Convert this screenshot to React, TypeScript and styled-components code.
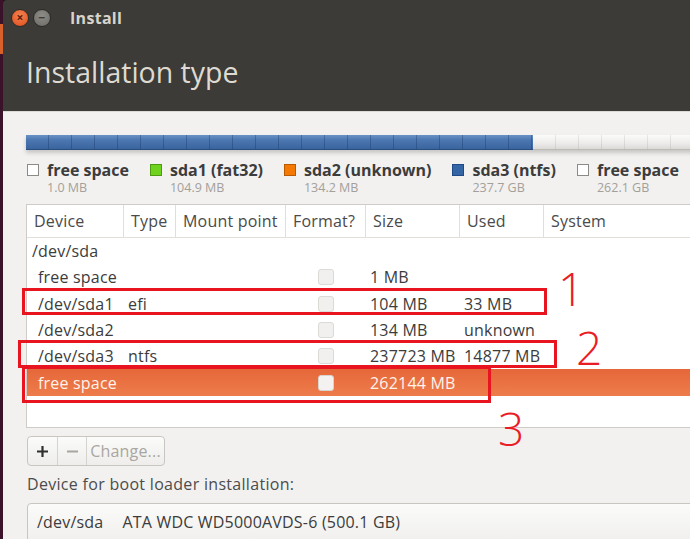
import React from 'react';
import styled, { createGlobalStyle } from 'styled-components';

const GlobalStyle = createGlobalStyle`
  html, body {
    margin: 0;
    padding: 0;
    width: 690px;
    height: 539px;
    overflow: hidden;
    background: #2b0b1e;
  }
  * { box-sizing: border-box; }
`;

const FONT = `"Open Sans", "DejaVu Sans", sans-serif`;

const Screen = styled.div`
  display: flex;
  width: 690px;
  height: 539px;
  font-family: ${FONT};
`;

const DesktopStrip = styled.div`
  width: 3px;
  flex-shrink: 0;
  background: linear-gradient(
    180deg,
    #3a1229 0 24px,
    #d8602a 24px 54px,
    #3a1229 54px 100%
  );
`;

const Window = styled.div`
  position: relative;
  flex: 1;
  display: flex;
  flex-direction: column;
  overflow: hidden;
  border-top-left-radius: 4px;
`;

const TitleBar = styled.div`
  height: 35px;
  flex-shrink: 0;
  display: flex;
  align-items: center;
  padding-left: 8px;
  gap: 4px;
  background: #3c3b37;
`;

const WinButton = styled.span<{ $kind: 'close' | 'min' }>`
  width: 18px;
  height: 18px;
  border-radius: 50%;
  display: flex;
  align-items: center;
  justify-content: center;
  font-size: 12px;
  line-height: 1;
  font-weight: 700;
  color: ${(p) => (p.$kind === 'close' ? '#5a2010' : '#3c3b37')};
  background: ${(p) =>
    p.$kind === 'close'
      ? 'radial-gradient(circle at 50% 35%, #f5824f, #df4d1c)'
      : 'radial-gradient(circle at 50% 35%, #8d8c87, #6c6b66)'};
  border: 1px solid #2c2b28;
`;

const TitleText = styled.span`
  margin-left: 15px;
  font-size: 16px;
  font-weight: 700;
  color: #d8d4cc;
  letter-spacing: 0.3px;
`;

const Header = styled.div`
  height: 76px;
  flex-shrink: 0;
  background: #3c3b37;
  padding-left: 23px;
  display: flex;
  align-items: center;
  padding-bottom: 2px;
`;

const HeaderTitle = styled.h1`
  margin: 0;
  font-family: ${FONT};
  font-size: 28.5px;
  font-weight: 400;
  color: #dedad1;
`;

const Content = styled.div`
  flex: 1;
  min-height: 0;
  background: #f2f1f0;
  border-top: 1px solid #dcd9d5;
  padding: 23px 0 0 23px;
  display: flex;
  flex-direction: column;
`;

const PartBar = styled.div`
  display: flex;
  flex-shrink: 0;
  height: 15px;
  margin-right: -20px;
  box-shadow: 0 3px 4px rgba(0, 0, 0, 0.18);
`;

const PartSegment = styled.div<{ $color: 'blue' | 'free' }>`
  height: 100%;
  background:
    repeating-linear-gradient(
      90deg,
      transparent 0 22px,
      ${(p) => (p.$color === 'blue' ? 'rgba(20,50,100,0.35)' : 'rgba(0,0,0,0.08)')} 22px 23px
    ),
    ${(p) =>
      p.$color === 'blue'
        ? 'linear-gradient(180deg, #6a92c6 0%, #4c77b0 35%, #39649e 100%)'
        : 'linear-gradient(180deg, #fbfbfa 0%, #ecebea 60%, #dcdad7 100%)'};
  border-bottom: 1px solid ${(p) => (p.$color === 'blue' ? '#2b4e80' : '#bdbab6')};
`;

const Legend = styled.div`
  display: flex;
  gap: 21px;
  margin-top: 11px;
  padding-left: 1px;
`;

const LegendItem = styled.div`
  display: grid;
  grid-template-columns: 12px auto;
  column-gap: 8px;
  align-items: center;
`;

const Swatch = styled.span<{ $color: string; $border: string }>`
  width: 12px;
  height: 12px;
  background: ${(p) => p.$color};
  border: 1px solid ${(p) => p.$border};
`;

const LegendLabel = styled.span`
  font-size: 16px;
  font-weight: 700;
  color: #3c3c3c;
  white-space: nowrap;
  line-height: 18px;
`;

const LegendSize = styled.span`
  grid-column: 2;
  margin-top: 1px;
  font-size: 12.5px;
  color: #a3a09b;
  line-height: 15px;
`;

const Table = styled.div`
  margin-top: 9px;
  margin-right: -20px;
  height: 224px;
  flex-shrink: 0;
  background: #fff;
  border: 1px solid #cfccc8;
  display: flex;
  flex-direction: column;
`;

const COLS = '96px 52px 110px 80px 94px 84px 1fr';

const HeadRow = styled.div`
  display: grid;
  grid-template-columns: ${COLS};
  height: 33px;
  border-bottom: 1px solid #e2dfdb;
`;

const HeadCell = styled.div`
  display: flex;
  align-items: center;
  padding-left: 7px;
  font-size: 16px;
  letter-spacing: 0.2px;
  color: #4a4a4a;
  white-space: nowrap;
  & + & {
    border-left: 1px solid #e2dfdb;
  }
`;

const Row = styled.div<{ $selected?: boolean }>`
  display: grid;
  grid-template-columns: ${COLS};
  height: 26.3px;
  align-items: center;
  font-size: 16px;
  letter-spacing: 0.2px;
  color: ${(p) => (p.$selected ? '#fff3ea' : '#3c3c3c')};
  background: ${(p) =>
    p.$selected ? 'linear-gradient(180deg, #e5673a 0%, #ee7c4b 100%)' : 'transparent'};
`;

const Cell = styled.div<{ $indent?: number }>`
  padding-left: ${(p) => p.$indent ?? 5}px;
  white-space: nowrap;
`;

const CheckCell = styled.div`
  padding-left: 33px;
  display: flex;
  align-items: center;
`;

const CheckBox = styled.span<{ $selected?: boolean }>`
  width: 16px;
  height: 16px;
  border-radius: 3px;
  background: ${(p) => (p.$selected ? '#f4f2f0' : '#f1f0ee')};
  border: 1px solid ${(p) => (p.$selected ? '#d8d4d0' : '#dcdad7')};
`;

const ButtonGroup = styled.div`
  display: flex;
  flex-shrink: 0;
  margin-top: 8px;
  margin-left: 1px;
  height: 30px;
  align-self: flex-start;
  border: 1px solid #c9c6c2;
  border-radius: 4px;
  overflow: hidden;
  background: linear-gradient(180deg, #fbfbfa 0%, #eeedeb 100%);
`;

const GroupButton = styled.span<{ $width: number; $enabled?: boolean }>`
  width: ${(p) => p.$width}px;
  display: flex;
  align-items: center;
  justify-content: center;
  font-size: 16px;
  letter-spacing: 0.2px;
  color: ${(p) => (p.$enabled ? '#2f2f2f' : '#a9a6a1')};
  & + & {
    border-left: 1px solid #d6d3cf;
  }
`;

const SignIcon = styled.svg`
  display: block;
`;

const BootLabel = styled.div`
  margin-top: 7px;
  padding-left: 1px;
  font-size: 16px;
  letter-spacing: 0.3px;
  color: #4c4c4c;
  line-height: 22px;
  flex-shrink: 0;
`;

const Combo = styled.div`
  margin-top: 8px;
  margin-left: 1px;
  margin-right: -20px;
  height: 40px;
  flex-shrink: 0;
  display: flex;
  align-items: flex-start;
  padding: 7px 0 0 9px;
  gap: 19px;
  font-size: 16px;
  letter-spacing: 0.2px;
  color: #3c3c3c;
  border: 1px solid #c9c6c2;
  border-radius: 4px;
  background: linear-gradient(180deg, #fbfbfa 0%, #f0efed 100%);
`;

const Annotation = styled.div<{ $x: number; $y: number; $w: number; $h: number }>`
  position: absolute;
  left: ${(p) => p.$x}px;
  top: ${(p) => p.$y}px;
  width: ${(p) => p.$w}px;
  height: ${(p) => p.$h}px;
  border: 3px solid #e8141f;
  pointer-events: none;
`;

const AnnotationNumber = styled.span<{ $x: number; $y: number }>`
  position: absolute;
  left: ${(p) => p.$x}px;
  top: ${(p) => p.$y}px;
  font-family: ${FONT};
  font-size: 46px;
  line-height: 46px;
  font-weight: 300;
  color: #ea1c26;
`;

type Part = {
  device: string;
  type?: string;
  size?: string;
  used?: string;
  indent: number;
  check?: boolean;
  selected?: boolean;
};

const parts: Part[] = [
  { device: '/dev/sda', indent: 5 },
  { device: 'free space', size: '1 MB', indent: 11, check: true },
  { device: '/dev/sda1', type: 'efi', size: '104 MB', used: '33 MB', indent: 11, check: true },
  { device: '/dev/sda2', size: '134 MB', used: 'unknown', indent: 11, check: true },
  { device: '/dev/sda3', type: 'ntfs', size: '237723 MB', used: '14877 MB', indent: 11, check: true },
  { device: 'free space', size: '262144 MB', indent: 11, check: true, selected: true },
];

const legend = [
  { label: 'free space', size: '1.0 MB', color: '#ffffff', border: '#8c8a86' },
  { label: 'sda1 (fat32)', size: '104.9 MB', color: '#6fd21d', border: '#4e9a12' },
  { label: 'sda2 (unknown)', size: '134.2 MB', color: '#f57900', border: '#b85a00' },
  { label: 'sda3 (ntfs)', size: '237.7 GB', color: '#3465a4', border: '#204a87' },
  { label: 'free space', size: '262.1 GB', color: '#ffffff', border: '#8c8a86' },
];

const App = () => {
  return (
    <Screen>
      <GlobalStyle />
      <DesktopStrip />
      <Window>
        <TitleBar>
          <WinButton $kind="close">×</WinButton>
          <WinButton $kind="min">−</WinButton>
          <TitleText>Install</TitleText>
        </TitleBar>
        <Header>
          <HeaderTitle>Installation type</HeaderTitle>
        </Header>
        <Content>
          <PartBar>
            <PartSegment $color="blue" style={{ width: 507 }} />
            <PartSegment $color="free" style={{ flex: 1 }} />
          </PartBar>
          <Legend>
            {legend.map((l, i) => (
              <LegendItem key={i}>
                <Swatch $color={l.color} $border={l.border} />
                <LegendLabel>{l.label}</LegendLabel>
                <LegendSize>{l.size}</LegendSize>
              </LegendItem>
            ))}
          </Legend>
          <Table>
            <HeadRow>
              <HeadCell>Device</HeadCell>
              <HeadCell>Type</HeadCell>
              <HeadCell>Mount point</HeadCell>
              <HeadCell>Format?</HeadCell>
              <HeadCell>Size</HeadCell>
              <HeadCell>Used</HeadCell>
              <HeadCell>System</HeadCell>
            </HeadRow>
            {parts.map((p, i) => (
              <Row key={i} $selected={p.selected}>
                <Cell $indent={p.indent}>{p.device}</Cell>
                <Cell>{p.type}</Cell>
                <Cell />
                <CheckCell>{p.check && <CheckBox $selected={p.selected} />}</CheckCell>
                <Cell>{p.size}</Cell>
                <Cell>{p.used}</Cell>
                <Cell />
              </Row>
            ))}
          </Table>
          <ButtonGroup>
            <GroupButton $width={29} $enabled>
              <SignIcon width="13" height="13" viewBox="0 0 13 13">
                <path d="M6.5 1v11M1 6.5h11" stroke="#2f2f2f" strokeWidth="2.2" />
              </SignIcon>
            </GroupButton>
            <GroupButton $width={29}>
              <SignIcon width="13" height="13" viewBox="0 0 13 13">
                <path d="M1 6.5h11" stroke="#a9a6a1" strokeWidth="2" />
              </SignIcon>
            </GroupButton>
            <GroupButton $width={78}>Change...</GroupButton>
          </ButtonGroup>
          <BootLabel>Device for boot loader installation:</BootLabel>
          <Combo>
            <span>/dev/sda</span>
            <span>ATA WDC WD5000AVDS-6 (500.1 GB)</span>
          </Combo>
        </Content>
        <Annotation $x={19} $y={288} $w={525} $h={27} />
        <Annotation $x={15} $y={340} $w={539} $h={28} />
        <Annotation $x={19} $y={366} $w={469} $h={37} />
        <AnnotationNumber $x={555} $y={265}>1</AnnotationNumber>
        <AnnotationNumber $x={573} $y={324}>2</AnnotationNumber>
        <AnnotationNumber $x={495} $y={405}>3</AnnotationNumber>
      </Window>
    </Screen>
  );
};

export default App;
